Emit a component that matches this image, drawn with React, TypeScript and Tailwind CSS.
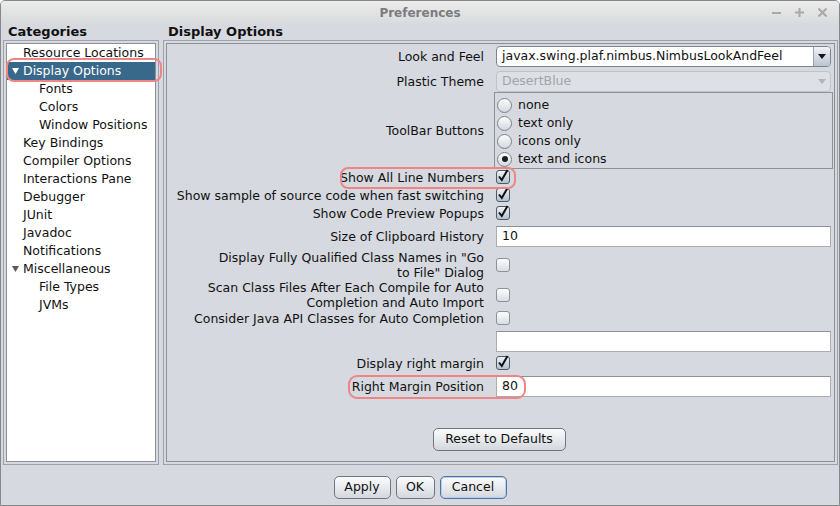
import type { ReactNode } from 'react';

// Arbre des catégories (niveau 1 ou 2)
const categories: { label: string; level: number; arrow?: boolean; selected?: boolean }[] = [
  { label: 'Resource Locations', level: 1 },
  { label: 'Display Options', level: 1, arrow: true, selected: true },
  { label: 'Fonts', level: 2 },
  { label: 'Colors', level: 2 },
  { label: 'Window Positions', level: 2 },
  { label: 'Key Bindings', level: 1 },
  { label: 'Compiler Options', level: 1 },
  { label: 'Interactions Pane', level: 1 },
  { label: 'Debugger', level: 1 },
  { label: 'JUnit', level: 1 },
  { label: 'Javadoc', level: 1 },
  { label: 'Notifications', level: 1 },
  { label: 'Miscellaneous', level: 1, arrow: true },
  { label: 'File Types', level: 2 },
  { label: 'JVMs', level: 2 },
];

function Checkbox({ checked }: { checked?: boolean }) {
  return (
    <div
      className={
        checked
          ? 'w-[14px] h-[14px] rounded-[3px] border border-[#4d5965] bg-gradient-to-b from-[#eef2f6] to-[#b3c1cf] flex items-center justify-center'
          : 'w-[14px] h-[14px] rounded-[3px] border border-[#8b929a] bg-gradient-to-b from-[#fcfcfd] to-[#dadee3]'
      }
    >
      {checked && (
        <svg width="12" height="13" viewBox="0 0 12 13" className="-mt-[3px]">
          <path d="M2 7.5 L4.8 11 L10.5 1" fill="none" stroke="#111" strokeWidth="2" />
        </svg>
      )}
    </div>
  );
}

function Radio({ selected, label }: { selected?: boolean; label: string }) {
  return (
    <div className="h-[18px] flex items-center gap-[6px] pl-[2px]">
      <div className="w-[15px] h-[15px] rounded-full border border-[#7d838a] bg-gradient-to-b from-[#fdfdfd] to-[#d3d8de] flex items-center justify-center">
        {selected && <div className="w-[6px] h-[6px] rounded-full bg-[#1e1e1e]" />}
      </div>
      <span>{label}</span>
    </div>
  );
}

function Combo({ value, disabled }: { value: string; disabled?: boolean }) {
  return (
    <div
      className={
        disabled
          ? 'flex h-[21px] rounded-[4px] border border-[#bfc4ca] bg-[#dde0e5] overflow-hidden'
          : 'flex h-[21px] rounded-[4px] border border-[#7b858f] bg-white overflow-hidden'
      }
    >
      <div className={disabled ? 'flex-1 pl-[5px] flex items-center text-[#a0a5ab]' : 'flex-1 pl-[5px] flex items-center'}>
        {value}
      </div>
      <div
        className={
          disabled
            ? 'w-[17px] flex items-center justify-center'
            : 'w-[17px] border-l border-[#9aa3ad] bg-gradient-to-b from-[#f1f3f6] to-[#bac4cf] flex items-center justify-center'
        }
      >
        <svg width="8" height="5" viewBox="0 0 8 5">
          <path d="M0 0 H8 L4 5 Z" fill={disabled ? '#b0b5bb' : '#151515'} />
        </svg>
      </div>
    </div>
  );
}

function Field({ value }: { value?: string }) {
  return (
    <div className="h-[21px] border border-[#a9adb3] border-t-[#8d9298] bg-white pl-[5px] flex items-center">
      {value}
    </div>
  );
}

function Row({ label, children, className }: { label: ReactNode; children: ReactNode; className: string }) {
  return (
    <div className={className}>
      <div className="w-[317px] shrink-0 text-right leading-[15px]">{label}</div>
      <div className="ml-[12px] flex-1">{children}</div>
    </div>
  );
}

function Button({ label, className }: { label: string; className: string }) {
  return (
    <div
      className={
        'h-[23px] rounded-[5px] border bg-gradient-to-b from-[#fcfcfd] to-[#d3d8de] flex items-center justify-center ' +
        className
      }
    >
      {label}
    </div>
  );
}

export default function App() {
  return (
    <div className="relative w-[840px] h-[506px] flex flex-col overflow-hidden rounded-t-[5px] border border-[#858789] bg-[#d6d9df] text-[12.5px] text-[#111] font-['DejaVu_Sans',sans-serif]">
      {/* Barre de titre */}
      <div className="relative h-[23px] shrink-0 flex items-center justify-center bg-gradient-to-b from-[#ececec] to-[#d9dadc]">
        <span className="font-bold text-[12px] text-[#7c7c7c]">Preferences</span>
        <div className="absolute right-[12px] top-0 h-full flex items-center gap-[14px]">
          <svg width="9" height="9" viewBox="0 0 9 9">
            <path d="M0 5 H9" stroke="#a9a9a9" strokeWidth="2" />
          </svg>
          <svg width="9" height="9" viewBox="0 0 9 9">
            <path d="M0 4.5 H9 M4.5 0 V9" stroke="#a9a9a9" strokeWidth="2" />
          </svg>
          <svg width="9" height="9" viewBox="0 0 9 9">
            <path d="M0.5 0.5 L8.5 8.5 M8.5 0.5 L0.5 8.5" stroke="#a9a9a9" strokeWidth="2" />
          </svg>
        </div>
      </div>

      {/* En-têtes */}
      <div className="h-[16px] shrink-0 flex font-bold text-[13px] leading-[16px]">
        <div className="w-[162px] pl-[7px]">Categories</div>
        <div className="pl-[5px]">Display Options</div>
      </div>

      {/* Panneaux */}
      <div className="h-[425px] shrink-0 flex gap-[4px] pl-[2px] pr-[1px]">
        <div className="w-[156px] border border-[#9ea2a8] p-[2px]">
          <div className="h-full border border-[#8d9094] bg-white">
            {categories.map((c) => (
              <div
                key={c.label}
                className={
                  c.selected
                    ? 'h-[18px] flex items-center bg-[#39698a] text-white'
                    : 'h-[18px] flex items-center'
                }
              >
                <div className="w-[16px] shrink-0 flex justify-end pr-[4px]">
                  {c.arrow && (
                    <svg width="7" height="6" viewBox="0 0 7 6">
                      <path d="M0 0 H7 L3.5 6 Z" fill={c.selected ? '#ffffff' : '#5a5a5a'} />
                    </svg>
                  )}
                </div>
                <span className={c.level === 2 ? 'pl-[16px]' : ''}>{c.label}</span>
              </div>
            ))}
          </div>
        </div>

        <div className="flex-1 border border-[#9ea2a8] p-[2px]">
          <div className="h-full border border-[#8d9094] pr-[3px] flex flex-col">
            <Row label="Look and Feel" className="mt-[2px] flex items-center">
              <Combo value="javax.swing.plaf.nimbus.NimbusLookAndFeel" />
            </Row>
            <Row label="Plastic Theme" className="mt-[4px] flex items-center">
              <Combo value="DesertBlue" disabled />
            </Row>
            <Row label="ToolBar Buttons" className="flex items-center">
              <div className="-mx-[2px] border border-[#8e9297] pt-[3px]">
                <Radio label="none" />
                <Radio label="text only" />
                <Radio label="icons only" />
                <Radio label="text and icons" selected />
              </div>
            </Row>
            <Row label="Show All Line Numbers" className="-mt-[1px] h-[18px] flex items-center">
              <Checkbox checked />
            </Row>
            <Row label="Show sample of source code when fast switching" className="h-[18px] flex items-center">
              <Checkbox checked />
            </Row>
            <Row label="Show Code Preview Popups" className="h-[18px] flex items-center">
              <Checkbox checked />
            </Row>
            <Row label="Size of Clipboard History" className="mt-[4px] flex items-center">
              <Field value="10" />
            </Row>
            <Row
              label={
                <>
                  Display Fully Qualified Class Names in "Go
                  <br />
                  to File" Dialog
                </>
              }
              className="mt-[3px] h-[30px] flex items-center"
            >
              <Checkbox />
            </Row>
            <Row
              label={
                <>
                  Scan Class Files After Each Compile for Auto
                  <br />
                  Completion and Auto Import
                </>
              }
              className="h-[30px] flex items-center"
            >
              <Checkbox />
            </Row>
            <Row label="Consider Java API Classes for Auto Completion" className="h-[16px] flex items-center">
              <Checkbox />
            </Row>
            <Row label="" className="mt-[5px] flex items-center">
              <Field />
            </Row>
            <Row label="Display right margin" className="mt-[2px] h-[18px] flex items-center">
              <Checkbox checked />
            </Row>
            <Row label="Right Margin Position" className="mt-[4px] flex items-center">
              <Field value="80" />
            </Row>
            <div className="mt-[31px] flex justify-center">
              <Button label="Reset to Defaults" className="w-[133px] border-[#6f767e]" />
            </div>
          </div>
        </div>
      </div>

      {/* Boutons du bas */}
      <div className="flex-1 flex justify-center items-start pt-[11px] gap-[5px]">
        <Button label="Apply" className="w-[57px] border-[#6f767e]" />
        <Button label="OK" className="w-[39px] border-[#6f767e]" />
        <Button label="Cancel" className="w-[67px] border-[#4e74a6] shadow-[inset_0_0_0_1px_#b9cde8]" />
      </div>

      {/* Annotations rouges */}
      <div className="absolute left-[5px] top-[57px] w-[156px] h-[24px] rounded-[8px] border-2 border-[#ef8585]" />
      <div className="absolute left-[339px] top-[166px] w-[176px] h-[22px] rounded-[8px] border-2 border-[#ef8585]" />
      <div className="absolute left-[347px] top-[374px] w-[178px] h-[24px] rounded-[9px] border-2 border-[#ef8585]" />
    </div>
  );
}
